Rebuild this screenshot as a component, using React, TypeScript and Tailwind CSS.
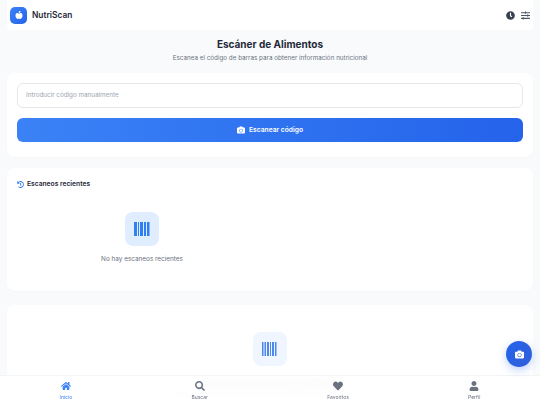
import React from "react";
import { FaAppleAlt, FaClock, FaSlidersH, FaCamera, FaHistory, FaHome, FaSearch, FaHeart, FaUser } from "react-icons/fa";

function Bars({ bars, color, opacity }: { bars: [number, number][]; color: string; opacity: number }) {
  return (
    <svg width="16" height="14" viewBox="0 0 16 14" aria-hidden="true">
      {bars.map(([x, w]) => (
        <rect key={x} x={x} y="0" width={w} height="14" fill={color} fillOpacity={opacity} />
      ))}
    </svg>
  );
}

function NavItem({ icon, label, active }: { icon: React.ReactNode; label: string; active?: boolean }) {
  return (
    <div className={active ? "flex flex-col items-center gap-[3px] text-[#3b82f6]" : "flex flex-col items-center gap-[3px] text-[#6b7280]"}>
      <span className="text-[10px] leading-none h-[10px] flex items-center">{icon}</span>
      <span className="text-[5px] leading-[6px] whitespace-nowrap">{label}</span>
    </div>
  );
}

export default function App() {
  return (
    <div className="relative h-[405px] w-[540px] overflow-hidden bg-[#f8fafc] text-[#1f2937] font-['Inter',sans-serif]">
      <header className="mx-[7px] h-[30px] bg-white rounded-b-[4px] flex items-center justify-between pl-[3px] pr-[3px]">
        <div className="flex items-center gap-[5px]">
          <div className="w-[17px] h-[17px] rounded-[5px] bg-gradient-to-br from-[#3b82f6] to-[#2563eb] flex items-center justify-center text-white text-[8px]">
            <FaAppleAlt />
          </div>
          <span className="text-[8.4px] font-semibold">NutriScan</span>
        </div>
        <div className="flex items-center gap-[6px] text-[9px]">
          <FaClock className="text-[#374151]" />
          <FaSlidersH className="text-[#4b5563]" />
        </div>
      </header>

      <main className="mx-[7px]">
        <div className="pt-[8px] h-[43px] text-center">
          <h1 className="text-[10px] leading-[13px] font-bold">Escáner de Alimentos</h1>
          <p className="mt-[3px] text-[6.3px] leading-[9px] text-[#6b7280]">Escanea el código de barras para obtener información nutricional</p>
        </div>

        <section className="h-[84px] bg-white rounded-[8px] shadow-[0_1px_2px_rgba(0,0,0,0.02)] px-[10px] pt-[10px]">
          <div className="h-[25px] rounded-[6px] border border-[#e5e7eb] flex items-center px-[8px] text-[6.3px] text-[#9ca3af]">
            Introducir código manualmente
          </div>
          <div className="mt-[10px] h-[24px] rounded-[6px] bg-gradient-to-r from-[#3b82f6] to-[#2563eb] flex items-center justify-center gap-[4px] text-white text-[6.7px] font-semibold">
            <FaCamera className="text-[8px]" />
            Escanear código
          </div>
        </section>

        <section className="mt-[11px] h-[123px] bg-white rounded-[8px] shadow-[0_1px_2px_rgba(0,0,0,0.02)] px-[10px] pt-[11px]">
          <div className="flex items-center gap-[3px] text-[6.7px] font-semibold">
            <FaHistory className="text-[#3b82f6] text-[7px]" />
            Escaneos recientes
          </div>
          <div className="ml-[108px] mt-[23px] w-[34px] h-[34px] rounded-[8px] bg-[#e0edff] flex items-center justify-center">
            <Bars color="#2f80f0" opacity={1} bars={[[0, 3], [4, 1], [6, 3], [10, 2], [13, 2.5]]} />
          </div>
          <p className="mt-[9px] ml-[50px] w-[150px] text-center text-[6.4px] leading-[9px] text-[#6b7280]">No hay escaneos recientes</p>
        </section>

        <section className="mt-[14px] h-[120px] bg-white rounded-[8px] pt-[27px] flex flex-col items-center">
          <div className="w-[34px] h-[34px] rounded-[8px] bg-[#eff6ff] flex items-center justify-center">
            <Bars color="#3b7dea" opacity={0.9} bars={[[0, 1.5], [2.5, 1.5], [5, 2], [8, 1], [10, 2], [13, 1.5]]} />
          </div>
          <p className="mt-[10px] text-[10px] leading-[12px] font-semibold text-[#1f2937]">Escanea tu primer producto</p>
          <p className="mt-[2px] text-[7.5px] leading-[9px] text-[#6b7280]">Obtén información nutricional detallada de tus alimentos</p>
        </section>
      </main>

      <nav className="absolute bottom-0 left-0 right-0 h-[30px] bg-white/95 backdrop-blur-[6px] border-t border-[#f3f4f6] flex justify-around items-center">
        <NavItem icon={<FaHome />} label="Inicio" active />
        <NavItem icon={<FaSearch />} label="Buscar" />
        <NavItem icon={<FaHeart />} label="Favoritos" />
        <NavItem icon={<FaUser />} label="Perfil" />
      </nav>

      <div className="absolute right-[8px] bottom-[38px] w-[26px] h-[26px] rounded-full bg-gradient-to-br from-[#2563eb] to-[#2f5fd8] shadow-[0_3px_8px_rgba(37,99,235,0.3)] flex items-center justify-center text-white text-[9px]">
        <FaCamera />
      </div>
    </div>
  );
}
